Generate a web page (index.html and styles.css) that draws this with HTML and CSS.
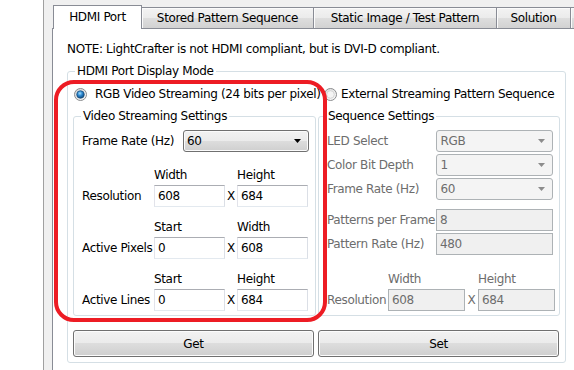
FILE: index.html
```html
<!DOCTYPE html>
<html lang="en">
<head>
    <meta charset="UTF-8">
    <meta name="viewport" content="width=device-width, initial-scale=1.0">
    <title>HDMI Port</title>
    <link rel="stylesheet" href="styles.css">
</head>
<body>

<div class="window">
    <div class="tabs">
        <div class="tab active">HDMI Port</div>
        <div class="tab tab-stored">Stored Pattern Sequence</div>
        <div class="tab tab-static">Static Image / Test Pattern</div>
        <div class="tab tab-solution">Solution</div>
        <div class="tab tab-more"></div>
    </div>

    <div class="panel">
        <p class="note">NOTE: LightCrafter is not HDMI compliant, but is DVI-D compliant.</p>

        <fieldset class="group outer">
            <legend>HDMI Port Display Mode</legend>

            <div class="modes">
                <label class="radio radio-rgb">
                    <svg width="13" height="13" viewBox="0 0 13 13">
                        <defs>
                            <linearGradient id="ringA" x1="0" y1="0" x2="1" y2="1">
                                <stop offset="0" stop-color="#d6d6d6"/>
                                <stop offset="1" stop-color="#fdfdfd"/>
                            </linearGradient>
                            <radialGradient id="dot" cx="0.42" cy="0.35" r="0.7">
                                <stop offset="0" stop-color="#a6e0ff"/>
                                <stop offset="0.45" stop-color="#2a86cf"/>
                                <stop offset="1" stop-color="#0b3d6b"/>
                            </radialGradient>
                        </defs>
                        <circle cx="6.5" cy="6.5" r="6" fill="url(#ringA)" stroke="#8a8c8e"/>
                        <circle cx="6.5" cy="6.5" r="3.8" fill="url(#dot)" stroke="#174a78" stroke-width="0.7"/>
                    </svg>
                    RGB Video Streaming (24 bits per pixel)
                </label>
                <label class="radio">
                    <svg width="13" height="13" viewBox="0 0 13 13">
                        <defs>
                            <linearGradient id="ringB" x1="0" y1="0" x2="1" y2="1">
                                <stop offset="0" stop-color="#d9d9d9"/>
                                <stop offset="1" stop-color="#fdfdfd"/>
                            </linearGradient>
                        </defs>
                        <circle cx="6.5" cy="6.5" r="6" fill="url(#ringB)" stroke="#8a8c8e"/>
                        <circle cx="6.5" cy="6.5" r="3.8" fill="#f4f4f4" stroke="#c8c8c8" stroke-width="0.7"/>
                    </svg>
                    External Streaming Pattern Sequence
                </label>
            </div>

            <div class="columns">
                <!-- left: enabled -->
                <fieldset class="group video">
                    <legend>Video Streaming Settings</legend>

                    <div class="row">
                        <span class="row-label">Frame Rate (Hz)</span>
                        <div class="combo">
                            <span>60</span>
                            <svg width="7" height="4" viewBox="0 0 7 4"><path d="M0 0h7L3.5 4z" fill="#000"/></svg>
                        </div>
                    </div>

                    <div class="dims first">
                        <span></span><span class="head">Width</span><span></span><span class="head">Height</span>
                        <span class="dim-label">Resolution</span>
                        <input class="field" value="608">
                        <span class="x">X</span>
                        <input class="field" value="684">
                    </div>
                    <div class="dims">
                        <span></span><span class="head">Start</span><span></span><span class="head">Width</span>
                        <span class="dim-label">Active Pixels</span>
                        <input class="field" value="0">
                        <span class="x">X</span>
                        <input class="field" value="608">
                    </div>
                    <div class="dims">
                        <span></span><span class="head">Start</span><span></span><span class="head">Height</span>
                        <span class="dim-label">Active Lines</span>
                        <input class="field" value="0">
                        <span class="x">X</span>
                        <input class="field" value="684">
                    </div>
                </fieldset>

                <!-- right: disabled -->
                <fieldset class="group sequence">
                    <legend>Sequence Settings</legend>

                    <div class="row first-row">
                        <span class="row-label">LED Select</span>
                        <div class="combo off"><span>RGB</span>
                            <svg width="7" height="4" viewBox="0 0 7 4"><path d="M0 0h7L3.5 4z" fill="#8c8c8c"/></svg></div>
                    </div>
                    <div class="row">
                        <span class="row-label">Color Bit Depth</span>
                        <div class="combo off"><span>1</span>
                            <svg width="7" height="4" viewBox="0 0 7 4"><path d="M0 0h7L3.5 4z" fill="#8c8c8c"/></svg></div>
                    </div>
                    <div class="row">
                        <span class="row-label">Frame Rate (Hz)</span>
                        <div class="combo off"><span>60</span>
                            <svg width="7" height="4" viewBox="0 0 7 4"><path d="M0 0h7L3.5 4z" fill="#8c8c8c"/></svg></div>
                    </div>
                    <div class="row gap-row">
                        <span class="row-label">Patterns per Frame</span>
                        <input class="field off wide" value="8" disabled>
                    </div>
                    <div class="row">
                        <span class="row-label">Pattern Rate (Hz)</span>
                        <input class="field off wide" value="480" disabled>
                    </div>

                    <div class="dims seq-dims">
                        <span></span><span class="head">Width</span><span></span><span class="head">Height</span>
                        <span class="dim-label">Resolution</span>
                        <input class="field off" value="608" disabled>
                        <span class="x">X</span>
                        <input class="field off" value="684" disabled>
                    </div>
                </fieldset>
            </div>

            <div class="buttons">
                <button>Get</button>
                <button>Set</button>
            </div>
        </fieldset>
    </div>
</div>

<!-- red highlight drawn over the screenshot -->
<div class="highlight"></div>

</body>
</html>
```

FILE: styles.css
```css
body {
    margin: 0;
    background: #fff;
    font-family: "DejaVu Sans", sans-serif;
    font-size: 12px;
    letter-spacing: -0.35px;
    line-height: 14px;
    color: #000;
    position: relative;
    height: 370px;
    overflow: hidden;
}

.window {
    box-sizing: border-box;
    margin-left: 43px;
    border-left: 1px solid #a0a0a0;
    background: #f0f0f0;
    padding: 5px 0 0 8px;
    height: 370px;
    overflow: hidden;
}

/* tab strip */
.tabs {
    display: flex;
    align-items: flex-end;
    height: 23px;
    padding-left: 2px;
}

.tab {
    box-sizing: border-box;
    flex: none;
    height: 21px;
    margin-left: -1px;
    padding-top: 3px;
    border: 1px solid #898c95;
    border-bottom: none;
    background: linear-gradient(#f3f3f3, #ebebeb 50%, #dedede 50%, #d2d2d2);
    box-shadow: inset 1px 1px 0 #fbfbfb;
    text-align: center;
    white-space: nowrap;
}

.tab.active {
    width: 89px;
    height: 24px;
    margin-bottom: -1px;
    padding-top: 4px;
    background: #fff;
    box-shadow: none;
    position: relative;
    z-index: 1;
}

.tab-stored { width: 173px; }
.tab-static { width: 184px; }
.tab-solution { width: 75px; }
.tab-more { width: 5px; }

.panel {
    box-sizing: border-box;
    width: 523px;
    height: 343px;
    background: #fff;
    border: 1px solid #898c95;
    padding-left: 14px;
}

.note {
    margin: 13px 0 0;
}

/* group boxes */
.group {
    box-sizing: border-box;
    margin: 0;
    min-width: 0;
    border: 1px solid #d5dfe5;
    border-radius: 3px;
}

.group legend {
    padding: 0 2px;
    line-height: 14px;
}

.outer {
    width: 499px;
    margin-top: 8px;
    padding: 0 5px 5px;
}

.outer > legend {
    margin-left: 2px;
}

.modes {
    display: flex;
    height: 16px;
    margin-top: 8px;
    align-items: center;
}

.radio {
    display: flex;
    align-items: center;
    white-space: nowrap;
    gap: 4px;
}

.radio-rgb {
    width: 251px;
    padding-left: 1px;
    box-sizing: border-box;
    gap: 8px;
}

.columns {
    display: flex;
    gap: 2px;
    margin-top: 7px;
}

.video,
.sequence {
    padding: 0 6px 4px 8px;
}

.video { width: 243px; }
.sequence { width: 242px; color: #6d6d6d; }

.video legend,
.sequence legend {
    margin-left: -1px;
    color: #000;
}

.row {
    display: flex;
    align-items: center;
    height: 22px;
    margin-top: 2px;
    white-space: nowrap;
}

.video .row { margin-top: 7px; }
.video .row-label { width: 101px; }

.sequence .first-row { margin-top: 7px; }
.sequence .gap-row { margin-top: 9px; }
.sequence .row-label { width: 110px; }

.combo {
    box-sizing: border-box;
    width: 126px;
    height: 22px;
    display: flex;
    align-items: center;
    justify-content: space-between;
    padding: 0 7px 0 3px;
    border: 1px solid #707070;
    border-radius: 3px;
    background: linear-gradient(#f2f2f2, #ebebeb 50%, #dddddd 50%, #cfcfcf);
    box-shadow: inset 0 0 0 1px #fbfbfb;
}

.combo.off {
    width: 117px;
    border-color: #adb2b5;
    background: #f4f4f4;
    box-shadow: none;
    color: #6d6d6d;
}

.field {
    box-sizing: border-box;
    width: 100%;
    height: 22px;
    margin: 0;
    padding: 0 3px;
    border: 1px solid #abadb3;
    border-color: #abadb3 #dbdfe6 #e3e9ef #e2e3ea;
    background: #fff;
    font: inherit;
    letter-spacing: inherit;
    color: #000;
    outline: none;
}

.field.off {
    border-color: #adb2b5;
    background: #f0f0f0;
    color: #6d6d6d;
}

.field.wide {
    width: 117px;
}

/* header + two boxes with an X between */
.dims {
    display: grid;
    grid-template-columns: 72px 71px 12px 71px;
    grid-template-rows: 14px 22px;
    row-gap: 3px;
    margin-top: 13px;
    white-space: nowrap;
}

.dims.first { margin-top: 16px; }

.seq-dims {
    grid-template-columns: 61px 77px 13px 77px;
    margin-top: 17px;
}

.dim-label,
.x {
    align-self: center;
}

.x {
    text-align: center;
}

.buttons {
    display: flex;
    gap: 4px;
    margin-top: 14px;
}

.buttons button {
    width: 241px;
    height: 27px;
    border: 1px solid #707070;
    border-radius: 3px;
    background: linear-gradient(#f2f2f2, #ebebeb 50%, #dddddd 50%, #cfcfcf);
    box-shadow: inset 0 0 0 1px #fcfcfc;
    font: inherit;
    letter-spacing: inherit;
    color: #000;
    padding: 0;
}

/* annotation */
.highlight {
    position: absolute;
    left: 54px;
    top: 80px;
    width: 273px;
    height: 242px;
    box-sizing: border-box;
    border: 4px solid #ed1c24;
    border-radius: 20px;
}
```
